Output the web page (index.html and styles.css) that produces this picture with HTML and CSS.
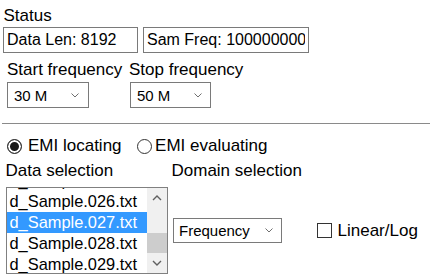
FILE: index.html
```html
<!DOCTYPE html>
<html>
<head>
<meta charset="utf-8">
<link rel="stylesheet" href="styles.css">
</head>
<body>
<div class="page">
  <div class="status-label">Status</div>
  <div class="status-row">
    <input class="field field-len" type="text" value="Data Len: 8192" readonly>
    <input class="field field-freq" type="text" value="Sam Freq: 1000000000" readonly>
  </div>
  <div class="freq-row">
    <div class="freq-col col-start">
      <div class="label">Start frequency</div>
      <div class="select sel-start"><span>30 M</span><svg class="chev" width="8" height="5" viewBox="0 0 8 5"><polyline points="0.5,0.5 4,4 7.5,0.5" fill="none" stroke="#6f6f6f" stroke-width="1"/></svg></div>
    </div>
    <div class="freq-col col-stop">
      <div class="label">Stop frequency</div>
      <div class="select sel-stop"><span>50 M</span><svg class="chev" width="8" height="5" viewBox="0 0 8 5"><polyline points="0.5,0.5 4,4 7.5,0.5" fill="none" stroke="#6f6f6f" stroke-width="1"/></svg></div>
    </div>
  </div>
  <div class="rule"></div>
  <div class="radio-row">
    <span class="radio checked"></span><span class="radio-text first">EMI locating</span>
    <span class="radio second"></span><span class="radio-text second-text">EMI evaluating</span>
  </div>
  <div class="sel-labels">
    <span class="lbl-data">Data selection</span>
    <span class="lbl-domain">Domain selection</span>
  </div>
  <div class="sel-row">
    <div class="listbox">
      <div class="options">
        <div class="options-inner">
          <div class="opt">d_Sample.025.txt</div>
          <div class="opt">d_Sample.026.txt</div>
          <div class="opt selected">d_Sample.027.txt</div>
          <div class="opt">d_Sample.028.txt</div>
          <div class="opt">d_Sample.029.txt</div>
        </div>
      </div>
      <div class="scrollbar">
        <div class="sb-btn"><svg width="10" height="6" viewBox="0 0 10 6"><polyline points="1,5 5,1 9,5" fill="none" stroke="#606060" stroke-width="1.4"/></svg></div>
        <div class="sb-track"><div class="sb-thumb"></div></div>
        <div class="sb-btn"><svg width="10" height="6" viewBox="0 0 10 6"><polyline points="1,1 5,5 9,1" fill="none" stroke="#606060" stroke-width="1.4"/></svg></div>
      </div>
    </div>
    <div class="select sel-domain"><span>Frequency</span><svg class="chev" width="8" height="5" viewBox="0 0 8 5"><polyline points="0.5,0.5 4,4 7.5,0.5" fill="none" stroke="#6f6f6f" stroke-width="1"/></svg></div>
    <span class="checkbox"></span><span class="check-text">Linear/Log</span>
  </div>
</div>
</body>
</html>
```
FILE: styles.css
```css
html, body {
  margin: 0;
  padding: 0;
  background: #ffffff;
}
body {
  font-family: "Liberation Sans", Arial, sans-serif;
  font-size: 17px;
  color: #000;
  width: 430px;
  height: 278px;
  overflow: hidden;
}
.page {
  display: flex;
  flex-direction: column;
}
.status-label {
  margin-top: 6px;
  margin-left: 3.5px;
  height: 20px;
  line-height: 20px;
}
.status-row {
  display: flex;
  gap: 5px;
  margin-top: 1px;
  margin-left: 3px;
}
.field {
  box-sizing: border-box;
  height: 26px;
  margin: 0;
  padding: 0 3px;
  border: 1px solid #7a7a7a;
  border-radius: 0;
  font-family: "Liberation Sans", Arial, sans-serif;
  font-size: 16px;
  color: #000;
  background: #fff;
  outline: none;
}
.field-len { width: 135px; }
.field-freq { width: 166px; }
.freq-row {
  display: flex;
  margin-top: 7px;
  margin-left: 7px;
}
.freq-col {
  display: flex;
  flex-direction: column;
}
.col-start { width: 122px; }
.label {
  height: 20px;
  line-height: 20px;
}
.select {
  box-sizing: border-box;
  display: flex;
  align-items: center;
  justify-content: space-between;
  border: 1px solid #7a7a7a;
  background: #fff;
  font-size: 15px;
  height: 26px;
}
.sel-start {
  margin-top: 2px;
  width: 82px;
  padding: 0 9px 0 6px;
}
.sel-stop {
  margin-top: 2px;
  margin-left: 1px;
  width: 81px;
  padding: 0 8px 0 6px;
}
.chev { display: block; }
.rule {
  margin-top: 15px;
  margin-left: 2px;
  height: 0;
  border-top: 1px solid #8a8a8a;
}
.radio-row {
  display: flex;
  align-items: center;
  margin-top: 12px;
  height: 20px;
  line-height: 20px;
}
.radio {
  box-sizing: border-box;
  width: 15px;
  height: 15px;
  border: 1px solid #333;
  border-radius: 50%;
  background: #fff;
}
.radio.checked {
  margin-left: 7px;
  background: #1a1a1a;
  box-shadow: inset 0 0 0 2px #fff;
}
.radio.second { margin-left: 15.5px; }
.radio-text.first { margin-left: 6px; }
.radio-text.second-text { margin-left: 3px; }
.sel-labels {
  display: flex;
  margin-top: 5px;
  height: 20px;
  line-height: 20px;
}
.lbl-data { margin-left: 5.5px; width: 166px; }
.sel-row {
  display: flex;
  align-items: center;
  margin-top: 6px;
  margin-left: 6px;
}
.listbox {
  box-sizing: border-box;
  display: flex;
  width: 162px;
  height: 87px;
  border: 1px solid #808080;
  overflow: hidden;
}
.options {
  flex: 1;
  overflow: hidden;
}
.options-inner { margin-top: -18.3px; }
.opt {
  height: 21px;
  line-height: 21px;
  padding-left: 2.5px;
  font-size: 16.4px;
  white-space: nowrap;
}
.opt.selected {
  background: #3399ff;
  color: #fff;
}
.scrollbar {
  width: 20px;
  display: flex;
  flex-direction: column;
  background: #f0f0f0;
}
.sb-btn {
  height: 20px;
  display: flex;
  align-items: center;
  justify-content: center;
}
.sb-btn svg { display: block; }
.sb-track {
  flex: 1;
  display: flex;
  flex-direction: column;
  justify-content: flex-end;
}
.sb-thumb {
  height: 20px;
  background: #cdcdcd;
}
.sel-domain {
  margin-left: 5px;
  width: 109px;
  height: 25px;
  padding: 0 8px 0 5px;
}
.checkbox {
  box-sizing: border-box;
  margin-left: 35px;
  width: 15px;
  height: 15px;
  border: 1px solid #333;
  background: #fff;
}
.check-text { margin-left: 5.5px; }
```
